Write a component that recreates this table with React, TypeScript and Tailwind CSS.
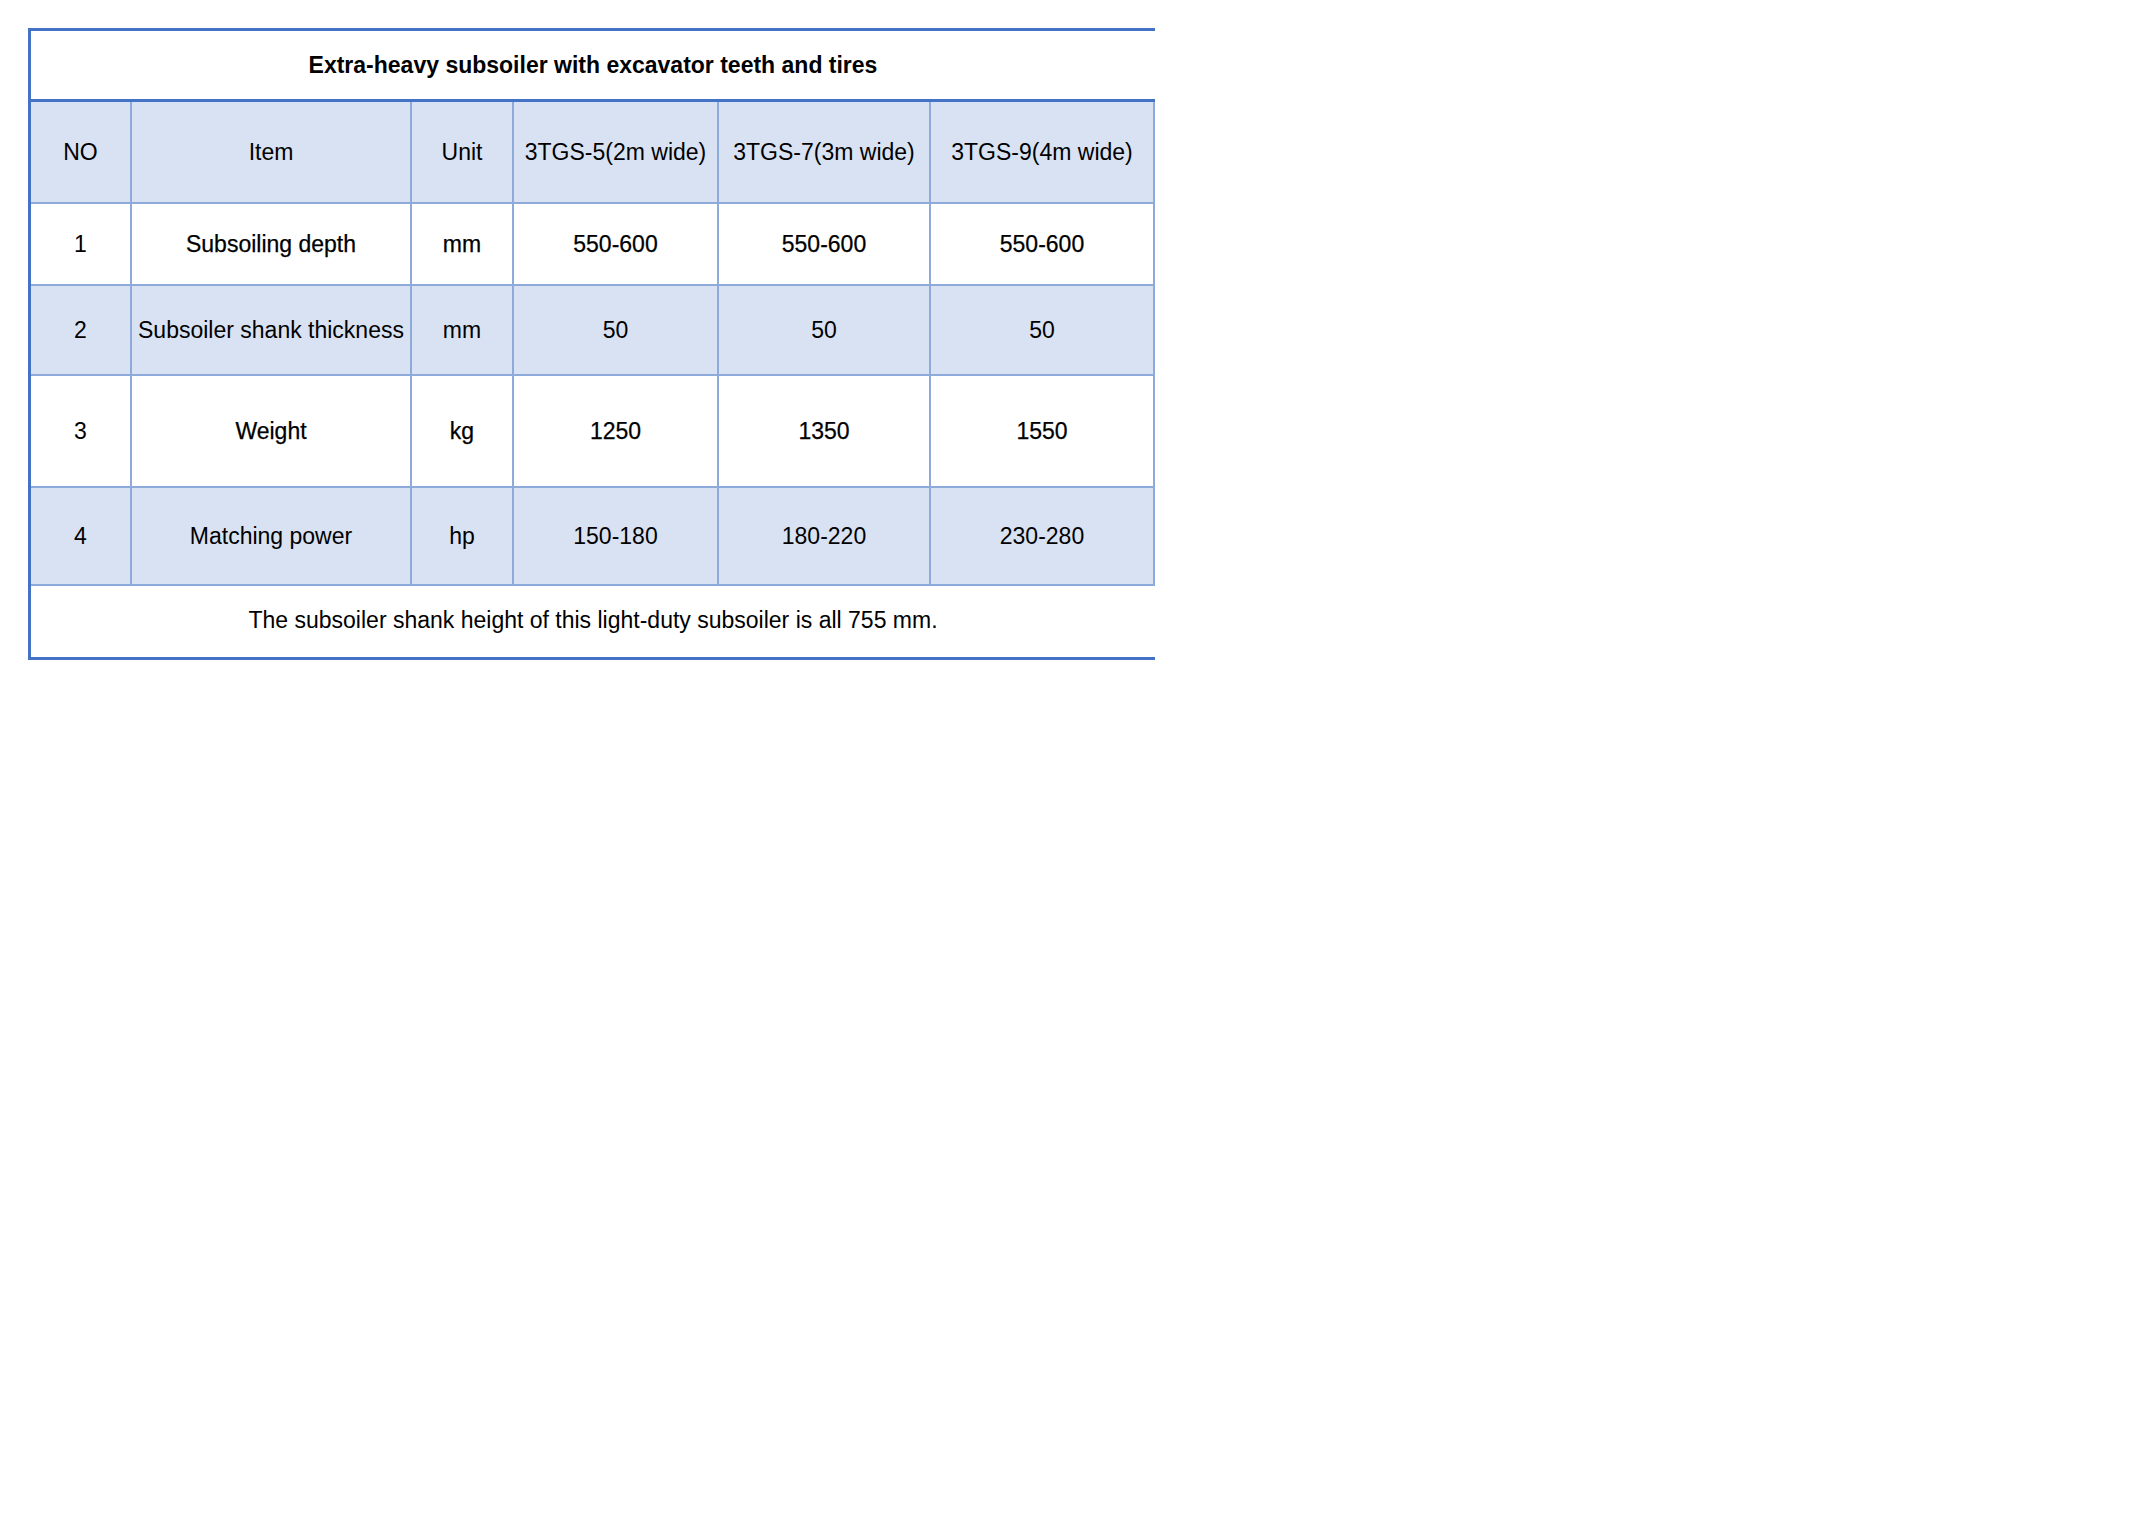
import React from "react";

const cols = "grid grid-cols-[101px_280px_102px_205px_212px_224px]";

type Row = { cells: string[]; h: string; fill: boolean; heavy: boolean };

const rows: Row[] = [
  { cells: ["NO", "Item", "Unit", "3TGS-5(2m wide)", "3TGS-7(3m wide)", "3TGS-9(4m wide)"], h: "h-[102px]", fill: true, heavy: false },
  { cells: ["1", "Subsoiling depth", "mm", "550-600", "550-600", "550-600"], h: "h-[82px]", fill: false, heavy: true },
  { cells: ["2", "Subsoiler shank thickness", "mm", "50", "50", "50"], h: "h-[90px]", fill: true, heavy: false },
  { cells: ["3", "Weight", "kg", "1250", "1350", "1550"], h: "h-[112px]", fill: false, heavy: true },
  { cells: ["4", "Matching power", "hp", "150-180", "180-220", "230-280"], h: "h-[98px]", fill: true, heavy: false },
];

export default function App() {
  return (
    <div className="min-h-[1518px] w-[2150px] bg-white pl-[28px] pt-[28px] font-['Liberation_Sans',Arial,sans-serif] text-[23px] text-black">
      <div className="w-[1127px] border-l-[3px] border-[#4472c4]">
        <div className="flex h-[74px] items-center justify-center border-y-[3px] border-[#4472c4] font-bold">
          Extra-heavy subsoiler with excavator teeth and tires
        </div>
        {rows.map((r, i) => (
          <div key={i} className={`${cols} ${r.h} ${r.fill ? "bg-[#d9e2f3]" : "bg-white"}`}>
            {r.cells.map((c, j) => (
              <div
                key={j}
                className={`flex items-center justify-center whitespace-nowrap border-b-2 border-r-2 border-[#8eaadb] ${
                  r.heavy && j > 0 ? "[-webkit-text-stroke:0.25px_#000]" : ""
                }`}
              >
                {c}
              </div>
            ))}
          </div>
        ))}
        <div className="flex h-[74px] items-center justify-center border-b-[3px] border-[#4472c4] pb-[2px]">
          The subsoiler shank height of this light-duty subsoiler is all 755 mm.
        </div>
      </div>
    </div>
  );
}
